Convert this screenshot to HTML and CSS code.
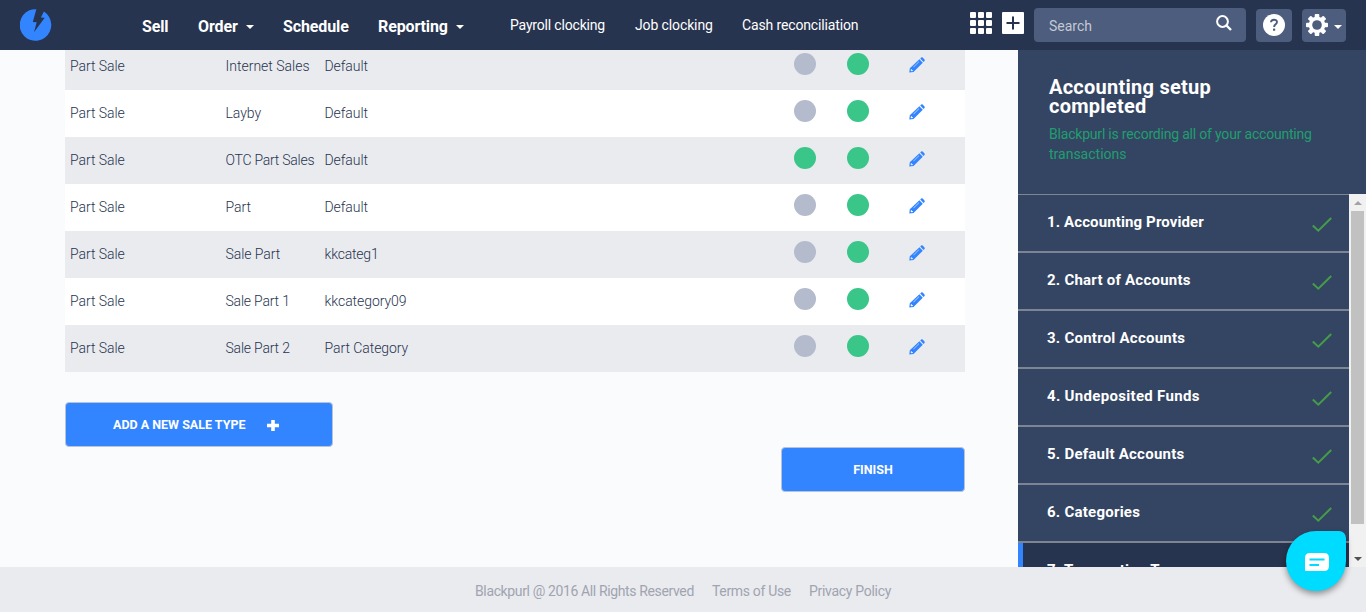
FILE: index.html
```html
<!DOCTYPE html>
<html lang="en">
<head>
<meta charset="utf-8">
<title>Blackpurl</title>
<link rel="stylesheet" href="styles.css">
</head>
<body>
<svg class="defs" width="0" height="0" aria-hidden="true">
  <symbol id="pencil" viewBox="0 0 16 16"><path fill="#3385ff" fill-rule="evenodd" d="M11.2 1.5 12.200.5q.7-.6 1.500.1l1.800 1.800q.6.8 0 1.500l-1 1zM10.400 2.300l3.400 3.400-9.300 9.300-4.200.5.500-4.200zM1.900 12.200l-.3 1.300.8.800 1.400-.3v-.9H2.900v-.9zM4.300 9.900l5.500-5.500.4.400-5.500 5.500z"/></symbol>
  <symbol id="check" viewBox="0 0 20 16"><path fill="none" stroke="#459c49" stroke-width="2" d="M.8 8.500 6.300 13.700 19.200 1"/></symbol>
</svg>
<header class="topbar">
  <svg class="logo" width="32" height="32" viewBox="0 0 32 32"><path fill="#3385ff" d="M16.300.2 A15.800 15.800 0 1 0 23.900 2.600 L20.900 8.500 24.700 8.700 14 23.200 16.700 13.200 12.800 13z"/></svg>
  <nav class="menu">
    <a class="t-sell">Sell</a>
    <a class="t-order">Order<i class="caret"></i></a>
    <a class="t-schedule">Schedule</a>
    <a class="t-reporting">Reporting<i class="caret"></i></a>
  </nav>
  <nav class="submenu">
    <a class="t-payroll">Payroll clocking</a>
    <a class="t-job">Job clocking</a>
    <a class="t-cash">Cash reconciliation</a>
  </nav>
  <div class="tools">
    <svg class="grid" width="22" height="22" viewBox="0 0 22 22" fill="#fff"><rect width="6" height="6" rx="1"/><rect x="8" width="6" height="6" rx="1"/><rect x="16" width="6" height="6" rx="1"/><rect y="8" width="6" height="6" rx="1"/><rect x="8" y="8" width="6" height="6" rx="1"/><rect x="16" y="8" width="6" height="6" rx="1"/><rect y="16" width="6" height="6" rx="1"/><rect x="8" y="16" width="6" height="6" rx="1"/><rect x="16" y="16" width="6" height="6" rx="1"/></svg>
    <svg class="add" width="22" height="22" viewBox="0 0 22 22"><rect width="22" height="22" rx="1" fill="#fff"/><path d="M11 4.500v13M4.500 11h13" stroke="#27344f" stroke-width="2"/></svg>
    <div class="search"><span>Search</span><svg width="16" height="16" viewBox="0 0 16 16" fill="none" stroke="#fff"><circle cx="6.500" cy="6.500" r="5.400" stroke-width="2"/><path d="M10.500 10.500 15 15" stroke-width="2.400"/></svg></div>
    <div class="tool help"><svg width="22" height="22" viewBox="0 0 22 22"><circle cx="11" cy="11" r="11" fill="#fff"/><path d="M8 8.200C8 4.900 14 4.900 14 8.100 14 10.300 11.100 10.300 11.100 12.900" fill="none" stroke="#4d5d7e" stroke-width="1.900"/><rect x="10" y="14.600" width="2.200" height="2.200" rx=".6" fill="#4d5d7e"/></svg></div>
    <div class="tool gear"><svg width="22" height="22" viewBox="-11 -11 22 22"><g fill="#fff"><rect x="-2.300" y="-11" width="4.600" height="22" rx="1"/><rect x="-2.300" y="-11" width="4.600" height="22" rx="1" transform="rotate(45)"/><rect x="-2.300" y="-11" width="4.600" height="22" rx="1" transform="rotate(90)"/><rect x="-2.300" y="-11" width="4.600" height="22" rx="1" transform="rotate(135)"/><circle r="8.300"/></g><circle r="4.800" fill="#4d5d7e"/></svg><i class="caret"></i></div>
  </div>
</header>
<div class="body">
  <main class="content">
    <div class="table">
      <div class="row"><span>Part Sale</span><span class="w-internet">Internet Sales</span><span>Default</span><i class="dot"></i><i class="dot on"></i><svg class="edit"><use href="#pencil"/></svg></div>
      <div class="row"><span>Part Sale</span><span>Layby</span><span>Default</span><i class="dot"></i><i class="dot on"></i><svg class="edit"><use href="#pencil"/></svg></div>
      <div class="row"><span>Part Sale</span><span class="w-otc">OTC Part Sales</span><span>Default</span><i class="dot on"></i><i class="dot on"></i><svg class="edit"><use href="#pencil"/></svg></div>
      <div class="row"><span>Part Sale</span><span>Part</span><span>Default</span><i class="dot"></i><i class="dot on"></i><svg class="edit"><use href="#pencil"/></svg></div>
      <div class="row"><span>Part Sale</span><span>Sale Part</span><span class="w-tight">kkcateg1</span><i class="dot"></i><i class="dot on"></i><svg class="edit"><use href="#pencil"/></svg></div>
      <div class="row"><span>Part Sale</span><span class="w-tight">Sale Part 1</span><span>kkcategory09</span><i class="dot"></i><i class="dot on"></i><svg class="edit"><use href="#pencil"/></svg></div>
      <div class="row"><span>Part Sale</span><span class="w-tight">Sale Part 2</span><span>Part Category</span><i class="dot"></i><i class="dot on"></i><svg class="edit"><use href="#pencil"/></svg></div>
    </div>
    <div class="btn add-type"><span>ADD A NEW SALE TYPE</span><svg width="12" height="11" viewBox="0 0 12 11"><path d="M6 0v11M0 5.500h12" stroke="#fff" stroke-width="3.600"/></svg></div>
    <div class="btn finish"><span>FINISH</span></div>
  </main>
  <aside class="side">
    <div class="intro">
      <h2>Accounting setup<br>completed</h2>
      <p><span class="p-one">Blackpurl is recording all of your accounting</span><br><span>transactions</span></p>
    </div>
    <div class="scroller">
      <div class="steps">
        <div class="step"><span class="s1">1. Accounting Provider</span><svg><use href="#check"/></svg></div>
        <div class="step"><span>2. Chart of Accounts</span><svg><use href="#check"/></svg></div>
        <div class="step"><span>3. Control Accounts</span><svg><use href="#check"/></svg></div>
        <div class="step"><span class="s4">4. Undeposited Funds</span><svg><use href="#check"/></svg></div>
        <div class="step"><span>5. Default Accounts</span><svg><use href="#check"/></svg></div>
        <div class="step"><span>6. Categories</span><svg><use href="#check"/></svg></div>
        <div class="step active"><span>7. Transaction Types</span></div>
      </div>
      <div class="scrollbar"><i class="arrow up"></i><i class="thumb"></i><i class="arrow down"></i></div>
    </div>
  </aside>
</div>
<footer class="footer"><span class="f1">Blackpurl @ 2016 All Rights Reserved</span><a class="f2">Terms of Use</a><a class="f3">Privacy Policy</a></footer>
<div class="chat"><svg width="24" height="18" viewBox="0 0 24 18"><path fill="#fff" d="M5 0h14q5 0 5 5v8q0 5-5 5H1q-1 0-1-1V5q0-5 5-5z"/><path d="M4.500 6.500h15M4.500 12h9.500" stroke="#00dcff" stroke-width="1.800"/></svg></div>
</body>
</html>
```
FILE: styles.css
```css
* { box-sizing: border-box; }
body { margin: 0; width: 1366px; height: 612px; overflow: hidden; display: flex; flex-direction: column; background: #fafbfd; font-family: Roboto, "Liberation Sans", sans-serif; font-size: 14px; color: #3c4350; }
.defs { position: absolute; }
.topbar { height: 50px; flex: none; display: flex; background: #27344f; color: #fff; white-space: nowrap; }
.logo { margin: 9px 0 0 20px; flex: none; }
.menu { display: flex; margin-left: 90px; line-height: 54px; font-size: 16px; font-weight: 700; letter-spacing: -.12px; }
.menu a { display: flex; align-items: center; flex: none; height: 54px; }
.t-sell { width: 56px; }
.t-order { width: 85px; }
.t-schedule { width: 95px; }
.t-reporting { width: 132px; }
.caret { width: 0; height: 0; border: 4px solid transparent; border-top-color: #fff; border-bottom: 0; margin-left: 8px; }
.submenu { display: flex; line-height: 50px; }
.submenu a { flex: none; }
.t-payroll { width: 125px; letter-spacing: -.18px; }
.t-job { width: 107px; letter-spacing: -.12px; }
.t-cash { width: 228px; letter-spacing: -.14px; }
.tools { display: flex; align-items: flex-start; }
.grid { margin-top: 12px; flex: none; }
.add { margin: 12px 0 0 10px; flex: none; }
.search { display: flex; justify-content: space-between; width: 212px; height: 34px; margin: 8px 0 0 10px; padding: 0 14px 0 15px; background: #4d5d7e; border-radius: 4px; color: #c3c9d5; line-height: 36px; }
.search svg { margin-top: 7px; }
.tool { height: 33px; margin: 9px 0 0 10px; background: #4d5d7e; border-radius: 4px; display: flex; align-items: center; }
.help { width: 36px; justify-content: center; }
.help svg, .gear svg { margin-bottom: 1px; }
.gear { width: 44px; padding-left: 4px; }
.gear .caret { margin: 3px 0 0 6px; }
.body { display: flex; flex: 1; min-height: 0; }
.content { width: 1018px; padding-left: 65px; overflow: hidden; }
.table { width: 900px; margin-top: -7px; }
.row { display: grid; grid-template-columns: 155.500px 99px 469.500px 53px 61px 20px; height: 47px; padding-left: 5px; background: #fff; line-height: 46px; white-space: nowrap; font-weight: 300; color: #27344f; letter-spacing: -.06px; }
.row:nth-child(odd) { background: #eaebef; }
.w-internet { letter-spacing: 0; }
.w-otc { letter-spacing: -.25px; }
.w-tight { letter-spacing: -.2px; }
.dot { width: 22px; height: 22px; border-radius: 50%; background: #b4bbcc; margin-top: 10px; }
.dot.on { background: #3ac689; }
.edit { width: 16px; height: 16px; margin: 14px 0 0 1px; }
.btn { display: flex; align-items: center; height: 45px; background: #3385ff; border: 1px solid #b9c3d6; border-radius: 4px; color: #fff; font-size: 12.500px; font-weight: 700; }
.add-type { width: 268px; margin-top: 30px; padding-left: 47px; gap: 21px; }
.add-type svg { margin-top: 2px; }
.finish { width: 184px; margin-left: 716px; justify-content: center; }
.side { width: 348px; display: flex; flex-direction: column; background: #344563; color: #fff; white-space: nowrap; }
.intro { height: 144px; flex: none; padding: 28px 0 0 31px; }
.intro h2 { margin: 0; font-size: 20px; line-height: 19px; font-weight: 700; letter-spacing: .25px; }
.intro p { margin: 8px 0 0; line-height: 20px; color: #1f9f6e; }
.p-one { letter-spacing: -.2px; }
.scroller { display: flex; flex: 1; min-height: 0; overflow: hidden; }
.steps { width: 331px; border-top: 1px solid #7e8592; }
.step { display: flex; justify-content: space-between; height: 58px; padding: 0 17px 0 29px; border-bottom: 2px solid #7e8592; line-height: 54px; font-size: 15px; font-weight: 700; letter-spacing: .24px; }
.step .s1 { letter-spacing: .12px; }
.step .s4 { letter-spacing: .31px; }
.step svg { width: 20px; height: 16px; margin-top: 22px; }
.active { background: #27344f; border-left: 5px solid #3385ff; padding-left: 24px; }
.scrollbar { width: 17px; background: #f1f1f1; display: flex; flex-direction: column; align-items: center; }
.arrow { width: 0; height: 0; border: 4px solid transparent; }
.up { border-top: 0; border-bottom-color: #a3a3a3; margin: 7px 0 6px; }
.thumb { width: 13px; height: 313px; background: #c1c1c1; }
.down { border-bottom: 0; border-top-color: #505050; margin-top: 33px; }
.footer { height: 45px; flex: none; display: flex; padding-left: 475px; background: #eaebef; color: #a0a4b0; line-height: 49px; white-space: nowrap; }
.footer span, .footer a { flex: none; }
.f1 { width: 237px; letter-spacing: -.37px; }
.f2 { width: 97px; letter-spacing: -.33px; }
.f3 { letter-spacing: -.3px; }
.chat { position: absolute; left: 1286px; top: 531px; width: 60px; height: 60px; display: flex; align-items: center; justify-content: center; padding: 2px 0 0 2px; background: #00dcff; border-radius: 50% 7px 50% 50%; box-shadow: 0 3px 6px rgba(0,0,0,.4); }
```
